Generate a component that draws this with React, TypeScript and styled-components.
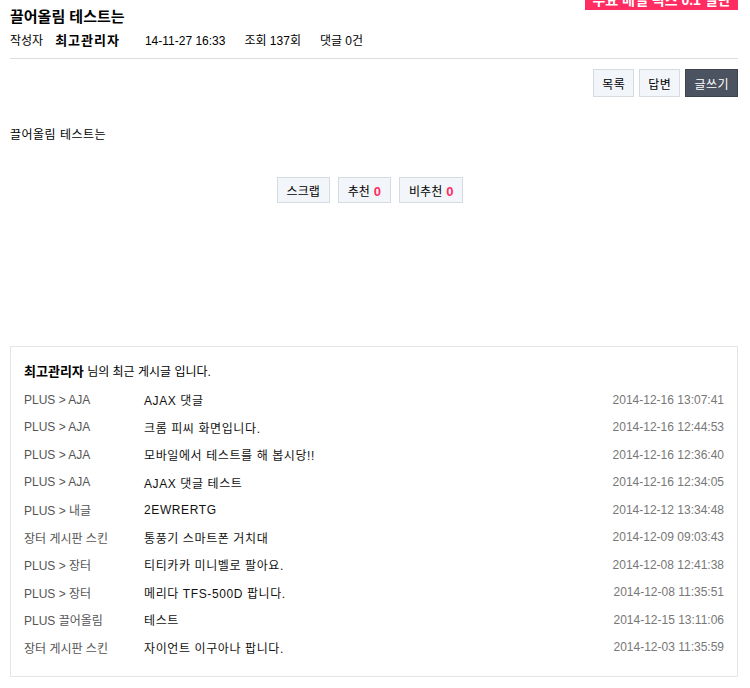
import React from 'react';
import styled, { createGlobalStyle } from 'styled-components';

const GlobalStyle = createGlobalStyle`
    html, body {
        margin: 0;
        padding: 0;
        background: #fff;
    }
    body {
        font-family: "Liberation Sans", "Noto Sans CJK KR", sans-serif;
        font-size: 12px;
        color: #000;
    }
`;

const Page = styled.div`
    position: relative;
    padding: 0 12px 12px 10px;
`;

// notice strip that is scrolled half out of view at the top
const Banner = styled.div`
    position: absolute;
    top: 0;
    right: 12px;
    width: 153px;
    height: 10px;
    overflow: hidden;
    background: #ff2d61;
    color: #fff;
    font-weight: bold;
    font-size: 14px;
    line-height: 14px;
    text-align: center;
    span {
        display: block;
        margin-top: -7px;
    }
`;

const Title = styled.h1`
    margin: 0;
    padding-top: 8px;
    font-size: 15px;
    line-height: 18px;
    font-weight: bold;
`;

const Meta = styled.div`
    display: flex;
    align-items: center;
    margin-top: 7px;
    padding-bottom: 9px;
    border-bottom: 1px solid #dcdcdc;
    line-height: 16px;
`;

const MetaItem = styled.span<{ $gap?: number; $bold?: boolean }>`
    margin-left: ${(p) => p.$gap ?? 0}px;
    font-weight: ${(p) => (p.$bold ? 'bold' : 'normal')};
    font-size: ${(p) => (p.$bold ? 13 : 12)}px;
    letter-spacing: ${(p) => (p.$bold ? 1 : 0)}px;
`;

const Toolbar = styled.div`
    display: flex;
    justify-content: flex-end;
    gap: 5px;
    margin-top: 10px;
`;

const Btn = styled.button<{ $dark?: boolean }>`
    height: 28px;
    padding: 0 8px;
    border: 1px solid ${(p) => (p.$dark ? '#3e4550' : '#d5dbdf')};
    background: ${(p) => (p.$dark ? '#4b5361' : '#f2f5f9')};
    color: ${(p) => (p.$dark ? '#fff' : '#000')};
    font-family: inherit;
    font-size: 12px;
    letter-spacing: 0.5px;
    cursor: pointer;
`;

const Content = styled.div`
    margin-top: 30px;
    line-height: 16px;
    letter-spacing: 0.5px;
`;

const Actions = styled.div`
    display: flex;
    justify-content: center;
    gap: 8px;
    margin-top: 34px;
    padding-right: 8px;
`;

const ActBtn = styled.button`
    height: 26px;
    padding: 0 9px;
    border: 1px solid #d5dbdf;
    background: #f2f5f9;
    color: #000;
    font-family: inherit;
    font-size: 12px;
    b {
        color: #ff2d61;
        margin-left: 4px;
        font-size: 13px;
    }
`;

const RecentBox = styled.div`
    margin-top: 143px;
    border: 1px solid #e5e5e5;
    padding: 17px 13px 15px 13px;
`;

const RecentHead = styled.div`
    line-height: 16px;
    margin-bottom: 6px;
    b {
        font-size: 13px;
    }
`;

const Row = styled.div`
    display: grid;
    grid-template-columns: 120px 1fr auto;
    height: 27.5px;
    align-items: center;
`;

const Cat = styled.span`
    color: #555;
`;

const Subject = styled.span`
    color: #111;
    letter-spacing: 0.6px;
`;

const Date = styled.span`
    color: #777;
`;

const rows = [
    ['PLUS > AJA', 'AJAX 댓글', '2014-12-16 13:07:41'],
    ['PLUS > AJA', '크롬 피씨 화면입니다.', '2014-12-16 12:44:53'],
    ['PLUS > AJA', '모바일에서 테스트를 해 봅시당!!', '2014-12-16 12:36:40'],
    ['PLUS > AJA', 'AJAX 댓글 테스트', '2014-12-16 12:34:05'],
    ['PLUS > 내글', '2EWRERTG', '2014-12-12 13:34:48'],
    ['장터 게시판 스킨', '통풍기 스마트폰 거치대', '2014-12-09 09:03:43'],
    ['PLUS > 장터', '티티카카 미니벨로 팔아요.', '2014-12-08 12:41:38'],
    ['PLUS > 장터', '메리다 TFS-500D 팝니다.', '2014-12-08 11:35:51'],
    ['PLUS 끌어올림', '테스트', '2014-12-15 13:11:06'],
    ['장터 게시판 스킨', '자이언트 이구아나 팝니다.', '2014-12-03 11:35:59'],
];

const App = () => {
    return (
        <Page>
            <GlobalStyle />
            <Banner>
                <span>주요 배열 픽스 0.1 일단</span>
            </Banner>
            <Title>끌어올림 테스트는</Title>
            <Meta>
                <MetaItem>작성자</MetaItem>
                <MetaItem $gap={12} $bold>
                    최고관리자
                </MetaItem>
                <MetaItem $gap={25}>14-11-27 16:33</MetaItem>
                <MetaItem $gap={19}>조회 137회</MetaItem>
                <MetaItem $gap={19}>댓글 0건</MetaItem>
            </Meta>
            <Toolbar>
                <Btn>목록</Btn>
                <Btn>답변</Btn>
                <Btn $dark>글쓰기</Btn>
            </Toolbar>
            <Content>끌어올림 테스트는</Content>
            <Actions>
                <ActBtn>스크랩</ActBtn>
                <ActBtn>
                    추천<b>0</b>
                </ActBtn>
                <ActBtn>
                    비추천<b>0</b>
                </ActBtn>
            </Actions>
            <RecentBox>
                <RecentHead>
                    <b>최고관리자</b> 님의 최근 게시글 입니다.
                </RecentHead>
                {rows.map((r, i) => (
                    <Row key={i}>
                        <Cat>{r[0]}</Cat>
                        <Subject>{r[1]}</Subject>
                        <Date>{r[2]}</Date>
                    </Row>
                ))}
            </RecentBox>
        </Page>
    );
};

export default App;
